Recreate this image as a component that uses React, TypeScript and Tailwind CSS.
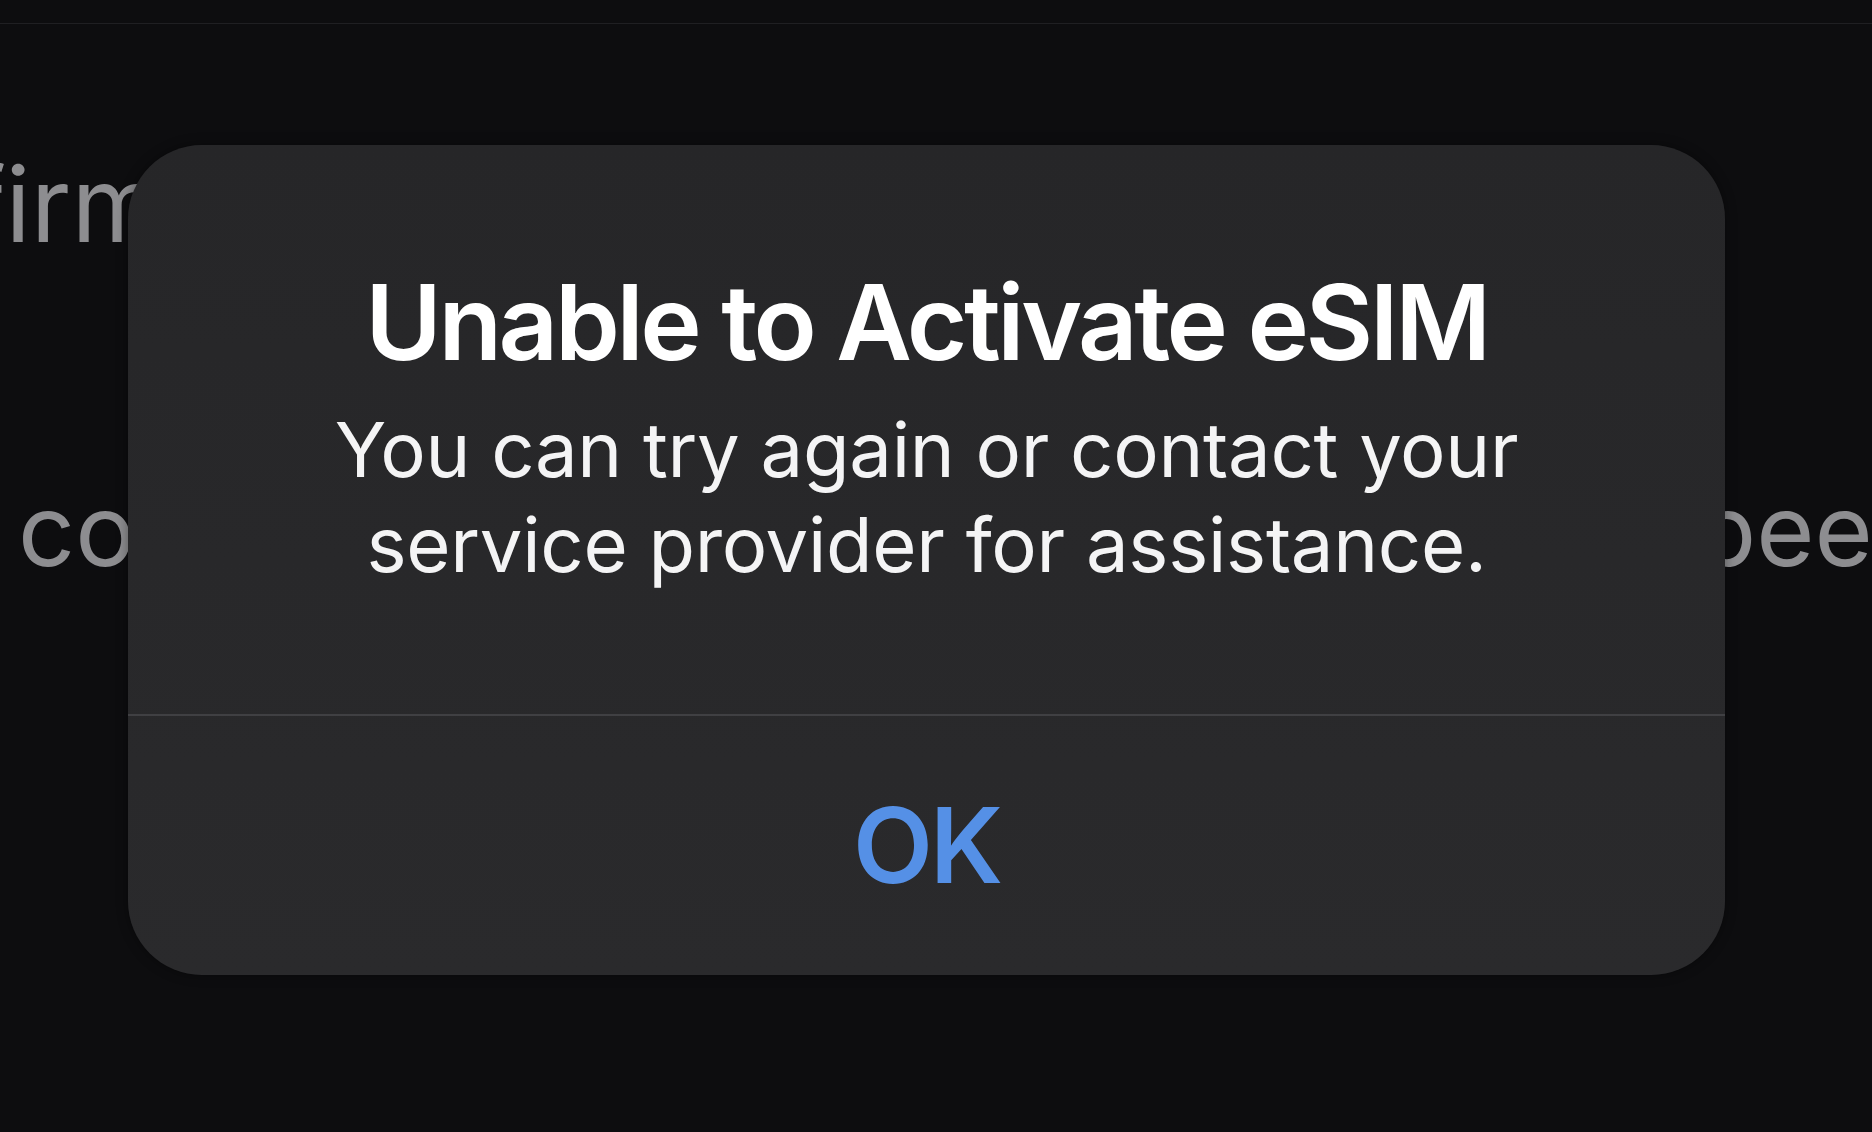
import React from 'react';

const font = { fontFamily: 'Inter, "Noto Sans", sans-serif' };

export default function App() {
  return (
    <div className="relative w-full h-[1132px] overflow-hidden bg-[#0d0d0f]" style={font}>
      {/* background settings screen */}
      <div className="h-[24px] border-b border-[#1f1f22]" />
      <div className="pt-[118px] whitespace-nowrap text-[104px] leading-[125px] text-[#8d8d90] ml-[-33px]">
        firm
      </div>
      <div className="mt-[203px] flex justify-between whitespace-nowrap text-[100px] leading-[120px] text-[#8d8d90]">
        <span className="pl-[18px]">con</span>
        <span className="mr-[-60px]">been</span>
      </div>

      {/* alert */}
      <div className="absolute left-[128px] top-[145px] w-[1597px] h-[830px] rounded-[74px] bg-gradient-to-b from-[#262628] to-[#2a2a2c] flex flex-col overflow-hidden shadow-[0_0_12px_rgba(0,0,0,0.4)]">
        <div className="h-[569px] flex flex-col items-center pt-[115px] text-white text-center">
          <div className="text-[104px] leading-[125px] font-semibold tracking-[-3.4px]">
            Unable to Activate eSIM
          </div>
          <div className="mt-[17px] text-[76px] leading-[95px] tracking-[-0.3px] text-[#f4f4f5]">
            You can try again or contact your
            <br />
            service provider for assistance.
          </div>
        </div>
        <div className="h-[2px] bg-[#404043]" />
        <div className="flex-1 flex items-center justify-center">
          <span className="text-[104px] leading-[125px] font-semibold tracking-[-3px] text-[#5590e6]">OK</span>
        </div>
      </div>
    </div>
  );
}
